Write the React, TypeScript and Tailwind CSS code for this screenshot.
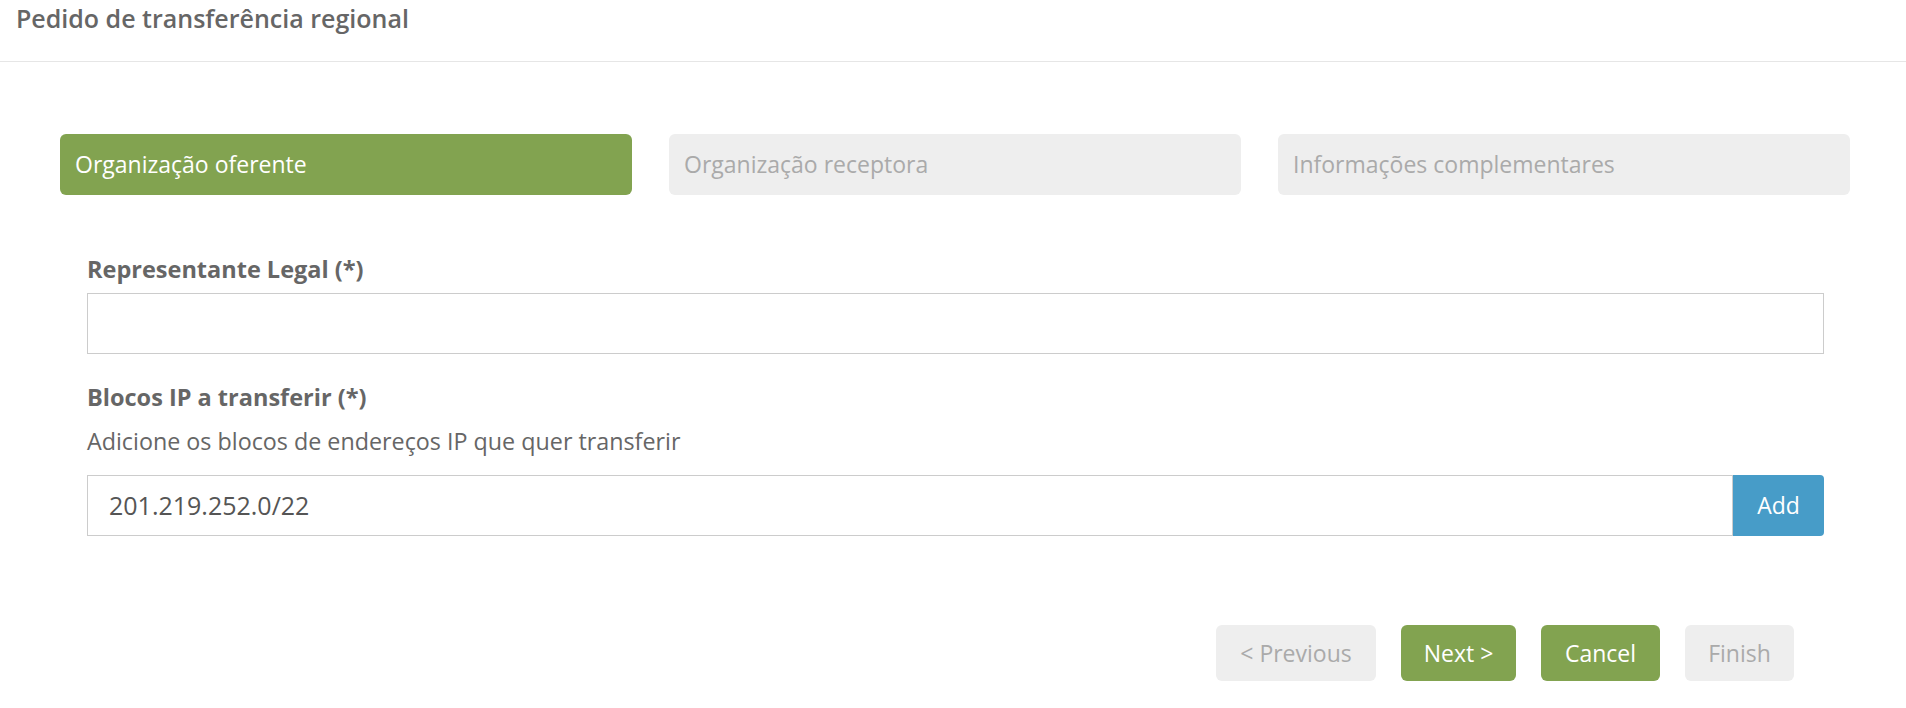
import React from "react";

const font = { fontFamily: '"Open Sans", "Noto Sans", sans-serif' };

export default function App() {
  return (
    <div className="w-[1906px] h-[708px] bg-white text-[#666]" style={font}>
      <div className="h-[62px] border-b border-[#e6e6e6] px-4 pt-[2px] flex items-start">
        <h1 className="text-[25px] leading-[32px] font-semibold text-[#666]">Pedido de transferência regional</h1>
      </div>
      <div className="pl-[60px] pr-[56px] pt-[72px]">
        <div className="grid grid-cols-3 gap-[37px]">
          <div className="h-[61px] rounded-[6px] bg-[#82a350] text-white text-[23px] flex items-center px-[15px]">Organização oferente</div>
          <div className="h-[61px] rounded-[6px] bg-[#eeeeee] text-[#aaaaaa] text-[23px] flex items-center px-[15px]">Organização receptora</div>
          <div className="h-[61px] rounded-[6px] bg-[#eeeeee] text-[#aaaaaa] text-[23px] flex items-center px-[15px]">Informações complementares</div>
        </div>
        <div className="pl-[27px] pr-[26px]">
          <div className="mt-[59px] text-[23.5px] leading-[30px] font-bold text-[#666]">Representante Legal (*)</div>
          <div className="mt-[9px] h-[61px] border border-[#cccccc] bg-white"></div>
          <div className="mt-[28px] text-[23.5px] leading-[30px] font-bold text-[#666]">Blocos IP a transferir (*)</div>
          <div className="mt-[14px] text-[23.3px] leading-[30px] text-[#666]">Adicione os blocos de endereços IP que quer transferir</div>
          <div className="mt-[19px] flex h-[61px]">
            <div className="flex-1 border border-[#cccccc] flex items-center px-[21px] text-[25px] text-[#555]">201.219.252.0/22</div>
            <button className="w-[91px] bg-[#479cc8] text-white text-[23px] rounded-r-[4px]">Add</button>
          </div>
        </div>
        <div className="mt-[89px] flex justify-end gap-[25px] pr-[56px]">
          <button className="h-[56px] w-[160px] rounded-[6px] bg-[#eeeeee] text-[#aaaaaa] text-[23px]">&lt; Previous</button>
          <button className="h-[56px] w-[115px] rounded-[6px] bg-[#82a350] text-white text-[23px]">Next &gt;</button>
          <button className="h-[56px] w-[119px] rounded-[6px] bg-[#82a350] text-white text-[23px]">Cancel</button>
          <button className="h-[56px] w-[109px] rounded-[6px] bg-[#eeeeee] text-[#aaaaaa] text-[23px]">Finish</button>
        </div>
      </div>
    </div>
  );
}
